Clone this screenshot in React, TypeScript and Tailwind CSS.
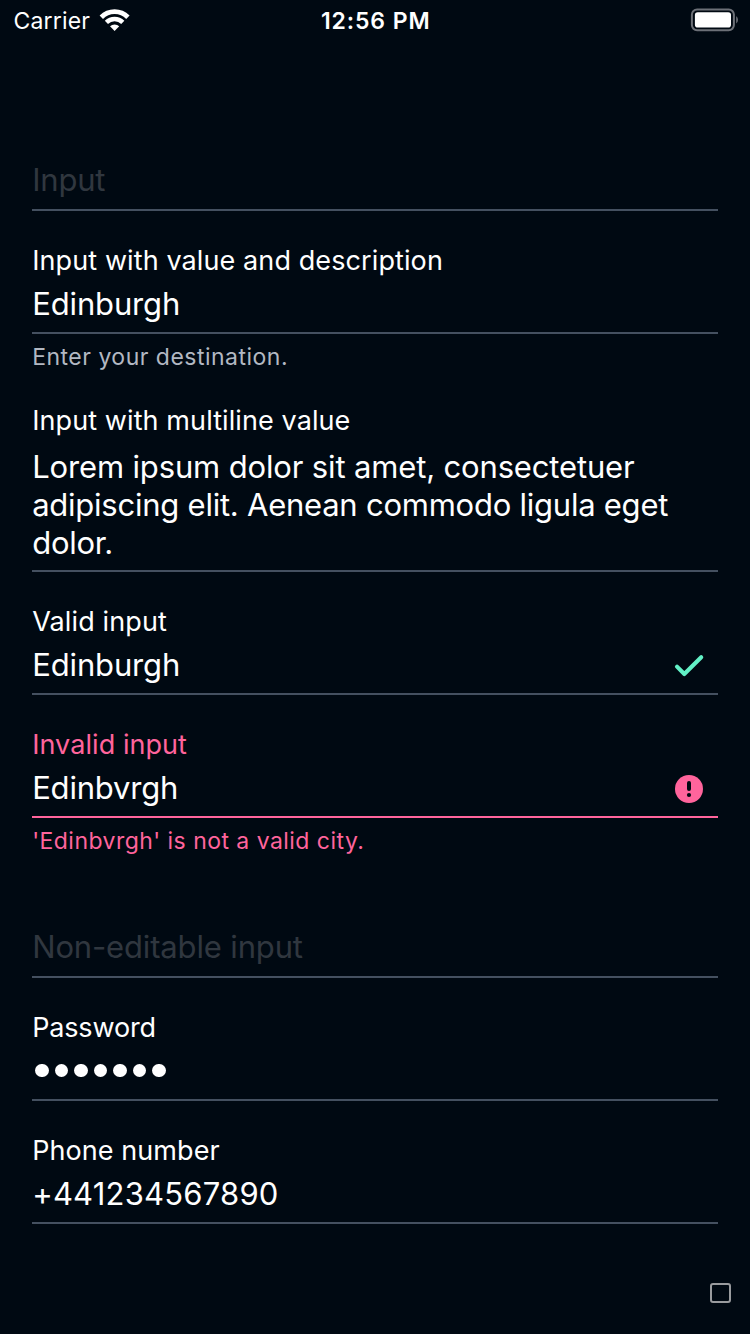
import type { ReactNode } from "react";

type FieldProps = {
  label?: string;
  labelClass?: string;
  children: ReactNode;
  invalid?: boolean;
  description?: string;
  descriptionClass?: string;
  icon?: ReactNode;
  multiline?: boolean;
};

function Field({
  label,
  labelClass = "",
  children,
  invalid = false,
  description,
  descriptionClass = "",
  icon,
  multiline = false,
}: FieldProps) {
  return (
    <div className="whitespace-nowrap">
      <div className={`h-9 pl-[0.2px] text-[27px] leading-[38px] ${invalid ? "text-[#ff649c]" : ""} ${labelClass}`}>
        {label}
      </div>
      <div
        className={`flex justify-between border-b-2 text-[31px] ${
          invalid ? "border-[#ff649c]" : "border-[#445060]"
        } ${multiline ? "pt-[10px] pb-2 leading-[38px]" : "h-14 items-center pb-[3px] leading-[51px]"}`}
      >
        <div className="pl-[0.2px]">{children}</div>
        {icon && <div className="mt-[2px] mr-[13px]">{icon}</div>}
      </div>
      {description && (
        <div
          className={`h-[37px] pt-[9px] pl-[0.2px] text-[23px] leading-[29px] ${
            invalid ? "text-[#ff649c]" : "text-[#b2b8c2]"
          } ${descriptionClass}`}
        >
          {description}
        </div>
      )}
    </div>
  );
}

function WifiIcon() {
  return (
    <svg className="-mt-1" width="32" height="24" viewBox="0.4 0 32 24" fill="none" stroke="white">
      <path d="M2.7 9.2A18.8 18.8 0 0 1 29.3 9.2" strokeWidth="4.8" />
      <path d="M7.8 14.3A11.6 11.6 0 0 1 24.2 14.3" strokeWidth="4.5" />
      <path d="M16 23L11.4 18.3A6.5 6.5 0 0 1 20.6 18.3Z" fill="white" stroke="none" />
    </svg>
  );
}

function BatteryIcon() {
  return (
    <svg className="-mt-1" width="48" height="24" viewBox="0 0 48 24" fill="none">
      <rect x="1.9" y="1.4" width="42" height="20.9" rx="5.2" stroke="#6c7077" strokeWidth="2" />
      <rect x="4.9" y="4.3" width="36.1" height="15.2" rx="2.8" fill="white" />
      <path d="M46.2 8v7.6q1.8-1.4 1.8-3.8T46.2 8Z" fill="#6c7077" />
    </svg>
  );
}

function CheckIcon() {
  return (
    <svg className="block" width="32" height="32" viewBox="0 0 32 32" fill="none">
      <path
        d="M4 16.6L11.3 24L28.2 7.2"
        stroke="#62f1c6"
        strokeWidth="4.1"
        strokeLinecap="round"
        strokeLinejoin="round"
      />
    </svg>
  );
}

function AlertIcon() {
  return (
    <svg className="block" width="32" height="32" viewBox="0 0 32 32">
      <circle cx="16" cy="16" r="14" fill="#ff649c" />
      <rect x="14" y="8" width="4" height="10" rx="2" fill="#000912" />
      <circle cx="16" cy="22" r="2.1" fill="#000912" />
    </svg>
  );
}

export default function App() {
  return (
    <main className="flex h-[1334px] w-[750px] flex-col overflow-hidden bg-[#000912] font-['Inter',sans-serif] text-white">
      <header className="flex h-[43px] items-center whitespace-nowrap text-[23px]">
        <div className="flex flex-1 items-center pl-[13.4px]">
          <span className="w-[85.2px] tracking-[0.2px]">Carrier</span>
          <WifiIcon />
        </div>
        <span className="font-semibold tracking-[0.9px]">12:56 PM</span>
        <div className="flex flex-1 justify-end pr-3">
          <BatteryIcon />
        </div>
      </header>

      <div className="flex flex-col gap-[31px] px-8 pt-[76px]">
        <Field>
          <span className="block -mt-[2px] tracking-[-0.2px] text-[#30373f]">Input</span>
        </Field>
        <Field
          label="Input with value and description"
          labelClass="tracking-[0.1px]"
          description="Enter your destination."
          descriptionClass="tracking-[0.49px]"
        >
          <span className="tracking-[-0.14px]">Edinburgh</span>
        </Field>
        <Field label="Input with multiline value" labelClass="tracking-[0.09px]" multiline>
          <p className="tracking-[-0.15px]">Lorem ipsum dolor sit amet, consectetuer</p>
          <p className="tracking-[-0.24px]">adipiscing elit. Aenean commodo ligula eget</p>
          <p className="tracking-[-0.28px]">dolor.</p>
        </Field>
        <Field label="Valid input" labelClass="tracking-[0.12px]" icon={<CheckIcon />}>
          <span className="tracking-[-0.14px]">Edinburgh</span>
        </Field>
        <Field
          label="Invalid input"
          labelClass="tracking-[0.06px]"
          invalid
          icon={<AlertIcon />}
          description="'Edinbvrgh' is not a valid city."
          descriptionClass="tracking-[0.46px]"
        >
          <span className="tracking-[-0.2px]">Edinbvrgh</span>
        </Field>
        <Field>
          <span className="block -mt-[2px] tracking-[-0.15px] text-[#30373f]">Non-editable input</span>
        </Field>
        <Field label="Password" labelClass="tracking-[-0.16px]">
          <div className="flex gap-[5.8px] pl-[3.1px]">
            {Array.from({ length: 7 }, (_, i) => (
              <span key={i} className="size-[13.7px] rounded-full bg-white" />
            ))}
          </div>
        </Field>
        <Field label="Phone number" labelClass="tracking-[0.07px]">
          <span className="tracking-[0.2px]">+441234567890</span>
        </Field>
      </div>

      <div className="mt-[59px] mr-[19px] h-5 w-[21px] self-end rounded-[3px] border-2 border-[#999b9e]" />
    </main>
  );
}
